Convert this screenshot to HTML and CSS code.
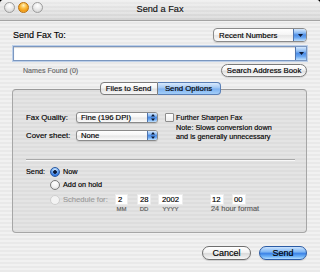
FILE: index.html
```html
<!DOCTYPE html>
<html lang="en">
<head>
<meta charset="utf-8">
<title>Send a Fax</title>
<link rel="stylesheet" href="styles.css">
</head>
<body>
<div class="window">
  <header class="titlebar">
    <div class="lights">
      <span class="light light-gray"></span>
      <span class="light light-orange"></span>
      <span class="light light-gray"></span>
    </div>
    <div class="title">Send a Fax</div>
    <div class="title-spacer"></div>
  </header>
  <main class="content">
    <div class="row-to">
      <span class="label-big">Send Fax To:</span>
      <div class="popup popup-recent">
        <span class="popup-text">Recent Numbers</span>
        <span class="cap cap-recent"><svg width="5" height="3" viewBox="0 0 5 3"><path d="M0 0H5L2.5 3Z"/></svg></span>
      </div>
    </div>
    <div class="combo">
      <span class="combo-field"></span>
      <span class="cap cap-combo"><svg width="5" height="3" viewBox="0 0 5 3"><path d="M0 0H5L2.5 3Z"/></svg></span>
    </div>
    <div class="row-found">
      <span class="found">Names Found (0)</span>
      <button class="search-btn">Search Address Book</button>
    </div>
    <div class="tabview">
      <div class="tabs">
        <span class="tab tab-files">Files to Send</span>
        <span class="tab tab-options">Send Options</span>
      </div>
      <div class="tabbox">
        <div class="quality">
          <div class="qgrid">
            <span class="lbl">Fax Quality:</span>
            <div class="popup popup-sm">
              <span class="popup-text">Fine (196 DPI)</span>
              <span class="cap cap-sm"><svg width="4" height="7" viewBox="0 0 4 7"><path d="M2 0L4 2.6H0Z M0 4.4H4L2 7Z"/></svg></span>
            </div>
            <span class="lbl">Cover sheet:</span>
            <div class="popup popup-sm">
              <span class="popup-text">None</span>
              <span class="cap cap-sm"><svg width="4" height="7" viewBox="0 0 4 7"><path d="M2 0L4 2.6H0Z M0 4.4H4L2 7Z"/></svg></span>
            </div>
          </div>
          <div class="sharpen">
            <div class="check-row"><span class="checkbox"></span><span class="check-lbl">Further Sharpen Fax</span></div>
            <div class="note">Note: Slows conversion down<br>and is generally unnecessary</div>
          </div>
        </div>
        <div class="sep"></div>
        <div class="send">
          <span class="send-lbl">Send:</span>
          <div class="radios">
            <div class="radio-row"><span class="radio radio-on"></span><span class="radio-lbl">Now</span></div>
            <div class="radio-row row-hold"><span class="radio"></span><span class="radio-lbl">Add on hold</span></div>
            <div class="radio-row row-sched">
              <span class="radio radio-dis"></span><span class="radio-lbl sched-lbl">Schedule for:</span>
              <div class="fields">
                <div class="fcol f-mm"><span class="fbox">2</span><span class="fcap">MM</span></div>
                <div class="fcol f-dd"><span class="fbox">28</span><span class="fcap">DD</span></div>
                <div class="fcol f-yy"><span class="fbox">2002</span><span class="fcap">YYYY</span></div>
                <div class="tcol">
                  <div class="tboxes"><span class="fbox tbox">12</span><span class="fbox tbox">00</span></div>
                  <span class="tcap">24 hour format</span>
                </div>
              </div>
            </div>
          </div>
        </div>
      </div>
    </div>
    <div class="actions">
      <button class="btn btn-cancel">Cancel</button>
      <button class="btn btn-send">Send</button>
    </div>
  </main>
</div>
</body>
</html>
```

FILE: styles.css
```css
* { box-sizing: border-box; }
html, body { margin: 0; padding: 0; background: #000; }
body {
  width: 320px; height: 272px; overflow: hidden;
  font-family: "Liberation Sans", Arial, sans-serif;
  font-size: 7.8px; color: #000;
  -webkit-text-stroke: 0.15px currentColor;
}
.window {
  width: 320px; height: 272px;
  border-radius: 4px 4px 0 0; overflow: hidden;
  background: repeating-linear-gradient(to bottom, #f1f1f1 0, #f1f1f1 2px, #e9e9e9 2px, #e9e9e9 4px);
}
.titlebar {
  height: 21px;
  display: grid; grid-template-columns: 1fr auto 1fr; align-items: start;
  background:
    repeating-linear-gradient(to bottom, rgba(255,255,255,0.25) 0, rgba(255,255,255,0.25) 2px, transparent 2px, transparent 4px),
    linear-gradient(#ececec, #d3d3d3);
  border-bottom: 1px solid #a4a4a4;
}
.lights { display: flex; gap: 3px; padding: 2px 0 0 4px; }
.light { width: 11px; height: 11px; border-radius: 50%; display: block; }
.light-gray {
  border: 1px solid #9c9c9c;
  background: radial-gradient(circle at 50% 30%, #ffffff 0, #ececec 45%, #c9c9c9 100%);
}
.light-orange {
  border: 1px solid #b8700e;
  background: radial-gradient(circle at 50% 28%, #fff3c4 0, #fbc24a 35%, #f29a12 70%, #ffd36b 100%);
}
.title { font-size: 9.2px; line-height: 19px; color: #111; }

.content { padding: 7px 13px 0 13px; }
.row-to { display: flex; justify-content: space-between; align-items: center; height: 14px; }
.label-big { font-size: 9px; line-height: 14px; }

.popup {
  display: flex; align-items: stretch;
  border: 1px solid #8a8a8a; border-radius: 4px; overflow: hidden;
  background: linear-gradient(#ffffff, #f6f6f6 45%, #e6e6e6 55%, #fbfbfb);
  box-shadow: 0 1px 1px rgba(0,0,0,0.12);
}
.popup-text { flex: 1; padding-left: 5px; white-space: nowrap; display: flex; align-items: center; }
.cap {
  display: flex; align-items: center; justify-content: center;
  border-left: 1px solid #4f74ad;
  background: linear-gradient(#d6e8fd 0, #93c0f4 30%, #4d8de6 50%, #6aa7f1 72%, #bfe0fe 100%);
}
.cap svg { fill: #0b1733; display: block; }
.popup-recent { width: 94px; height: 14px; }
.popup-recent .popup-text { font-size: 7.8px; }
.cap-recent { width: 13px; }

.combo {
  margin-top: 4px; height: 15px; display: flex;
  border: 1px solid #7b97c0; background: #fff;
  box-shadow: 0 0 0 1px #bccfe9;
}
.combo-field { flex: 1; box-shadow: inset 0 1px 1px rgba(0,0,0,0.18); }
.cap-combo { width: 11px; }

.row-found { margin-top: 3px; height: 13px; display: flex; justify-content: space-between; align-items: center; }
.found { padding-left: 10px; font-size: 7.1px; color: #6a6a6a; }
.search-btn {
  width: 86px; height: 13px; padding: 0;
  font-family: inherit; font-size: 7.75px; color: #000; line-height: 11px;
  border: 1px solid #7a7a7a; border-radius: 7px;
  background: linear-gradient(#ffffff, #f4f4f4 45%, #dedede 55%, #f9f9f9);
  box-shadow: 0 1px 1px rgba(0,0,0,0.12);
}

.tabview { margin-top: 5px; }
.tabs { display: flex; justify-content: center; position: relative; z-index: 1; height: 13px; }
.tab {
  height: 13px; line-height: 11px; font-size: 7.8px; text-align: center;
  border: 1px solid #7c7c7c;
}
.tab-files {
  width: 58px; border-radius: 4px 0 0 4px;
  background: linear-gradient(#ffffff, #f3f3f3 45%, #e0e0e0 55%, #f7f7f7);
}
.tab-options {
  width: 63px; border-radius: 0 4px 4px 0; border-left: none; border-color: #5a7fb6;
  background: linear-gradient(#d9eafd 0, #a7cbf5 40%, #7fb2f0 55%, #a4cff9 100%);
}
.tabbox {
  margin: -6px 0 0 -1px; height: 144px;
  border: 1px solid #a6a6a6; border-top-color: #9a9a9a; border-radius: 4px;
  background: rgba(0,0,0,0.05);
  padding: 22px 0 0 13px;
}
.quality { display: flex; gap: 7px; }
.qgrid { display: grid; grid-template-columns: 50px 82px; grid-auto-rows: 11px; row-gap: 7px; }
.lbl { font-size: 7.85px; line-height: 11px; white-space: nowrap; }
.popup-sm { height: 11px; border-radius: 3px; }
.popup-sm .popup-text { font-size: 7.7px; padding-left: 4px; }
.cap-sm { width: 10px; }

.check-row { display: flex; align-items: center; height: 11px; gap: 2px; }
.checkbox {
  width: 9px; height: 9px; display: block;
  border: 1px solid #8d8d8d; border-radius: 1px;
  background: linear-gradient(#ffffff, #ededed);
}
.check-lbl { font-size: 7.2px; white-space: nowrap; }
.note { padding-left: 11px; font-size: 7.3px; line-height: 9px; white-space: nowrap; }

.sep { margin: 18px 11px 0 0; height: 2px; border-top: 1px solid #a9a9a9; border-bottom: 1px solid #f8f8f8; }

.send { margin-top: 5px; display: flex; }
.send-lbl { width: 24px; font-size: 7.3px; line-height: 11px; }
.radios { display: flex; flex-direction: column; }
.radio-row { display: flex; align-items: flex-start; height: 11px; }
.row-hold { margin-top: 2px; }
.row-sched { margin-top: 4px; height: auto; }
.radio {
  width: 10px; height: 10px; margin-top: 0.5px; display: block; border-radius: 50%;
  border: 1px solid #7c7c7c;
  background: radial-gradient(circle at 50% 30%, #ffffff 0, #f2f2f2 50%, #d2d2d2 100%);
}
.radio-on {
  border-color: #2b5aa2;
  background:
    radial-gradient(circle at 50% 50%, #0b1a3a 0, #0b1a3a 1.5px, transparent 2.2px),
    radial-gradient(circle at 50% 25%, #dcedff 0, #79b1f2 40%, #2f72dc 75%, #84c2fb 100%);
}
.radio-dis { border-color: #cfcfcf; background: #f3f3f3; }
.radio-lbl { margin-left: 3px; font-size: 7.3px; line-height: 11px; white-space: nowrap; }
.sched-lbl { width: 52px; color: #9c9c9c; font-size: 7.6px; }

.fields { display: flex; align-items: flex-start; }
.fcol { display: flex; flex-direction: column; align-items: center; }
.fbox {
  display: block; height: 11px; width: 100%;
  background: #fff; border: 1px solid #ececec;
  font-size: 7.7px; line-height: 9px; padding-left: 2px; white-space: nowrap;
}
.f-mm { width: 13px; }
.f-dd { width: 14px; margin-left: 9px; }
.f-yy { width: 25px; margin-left: 7px; }
.f-yy .fbox { padding-left: 3px; }
.fcap { font-size: 6px; line-height: 8px; color: #5a5a5a; }
.tcol { margin-left: 27px; display: flex; flex-direction: column; align-items: flex-start; }
.tboxes { display: flex; gap: 8px; }
.tbox { width: 14px; padding-left: 1px; }
.tcap { font-size: 7.4px; line-height: 8px; color: #5a5a5a; padding-left: 1px; white-space: nowrap; }

.actions { display: flex; justify-content: flex-end; gap: 8px; margin-top: 13px; }
.btn {
  height: 14px; padding: 0; border-radius: 7px;
  font-family: inherit; font-size: 9px; line-height: 12px; color: #000;
  box-shadow: 0 1px 1px rgba(0,0,0,0.15);
}
.btn-cancel {
  width: 49px; border: 1px solid #6e6e6e;
  background: linear-gradient(#ffffff, #f2f2f2 45%, #dadada 55%, #f7f7f7);
}
.btn-send {
  width: 48px; border: 1px solid #2b5ba4;
  background: linear-gradient(#cbe3fe 0, #80b7f4 40%, #3d84e7 55%, #6fb4f8 80%, #b4dcff 100%);
}
```
